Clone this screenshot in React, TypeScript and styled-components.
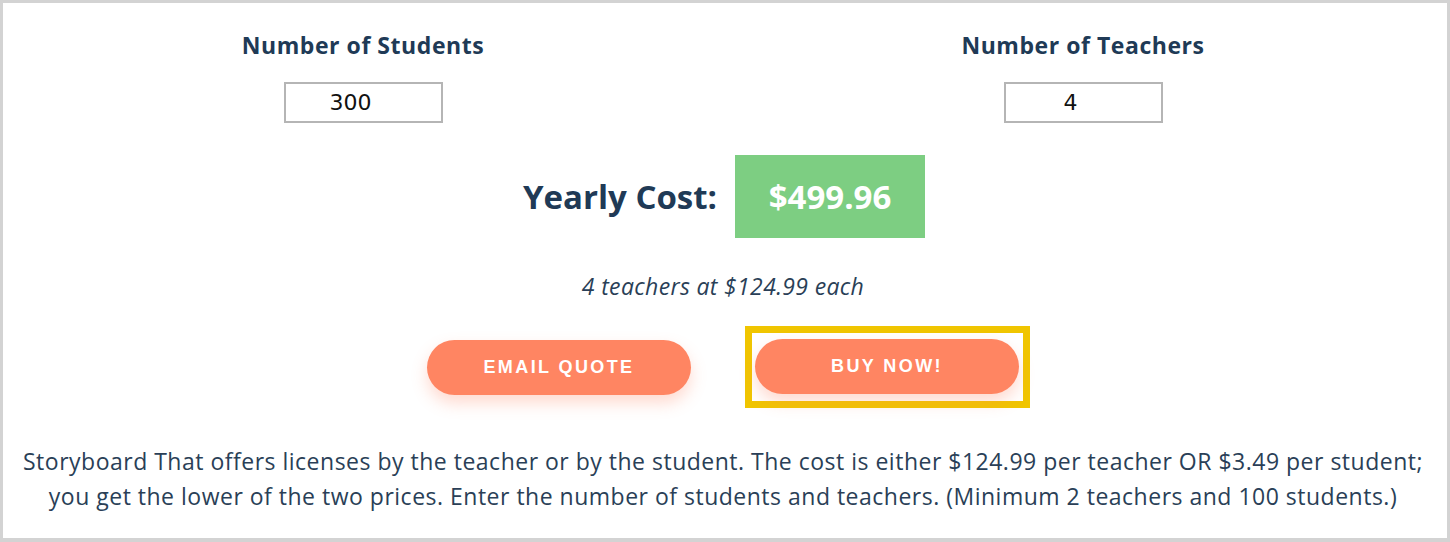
import React from "react";
import styled, { createGlobalStyle } from "styled-components";

const Global = createGlobalStyle`
  html, body { margin: 0; padding: 0; background: #ffffff; }
  * { box-sizing: border-box; }
`;

const Page = styled.div`
  width: 1450px;
  height: 542px;
  border: 3px solid #d3d3d3;
  border-bottom-width: 4px;
  background: #fff;
  font-family: "Open Sans", "Liberation Sans", sans-serif;
  color: #203a56;
  display: flex;
  flex-direction: column;
  align-items: center;
`;

const Fields = styled.div`
  display: grid;
  grid-template-columns: 720px 720px;
  width: 1440px;
  align-self: flex-start;
  padding-top: 27px;
`;

const Field = styled.div`
  display: flex;
  flex-direction: column;
  align-items: center;
`;

const Label = styled.label`
  font-size: 23px;
  font-weight: 700;
  letter-spacing: 0.55px;
  line-height: 30px;
  color: #203a56;
`;

const NumberInput = styled.input`
  margin-top: 22px;
  width: 159px;
  height: 41px;
  border: 2px solid #b5b5b5;
  border-radius: 0;
  padding: 0 25px 0 0;
  text-align: center;
  font-family: "DejaVu Sans", sans-serif;
  font-size: 22px;
  color: #111;
  background: #fff;
  outline: none;
`;

const CostRow = styled.div`
  display: flex;
  align-items: center;
  gap: 18px;
  margin-top: 32px;
  width: 1440px;
  align-self: flex-start;
  justify-content: center;
  padding-left: 2px;
`;

const CostLabel = styled.span`
  font-size: 33px;
  font-weight: 700;
  color: #203a56;
`;

const CostBox = styled.div`
  width: 190px;
  height: 83px;
  background: #7dce82;
  color: #fff;
  font-size: 33px;
  font-weight: 700;
  display: flex;
  align-items: center;
  justify-content: center;
`;

const Note = styled.p`
  margin: 33px 0 0;
  font-size: 23px;
  font-style: italic;
  letter-spacing: 0.35px;
  line-height: 30px;
  color: #2a3f57;
  width: 1440px;
  align-self: flex-start;
  text-align: center;
`;

const Buttons = styled.div`
  display: flex;
  align-items: center;
  justify-content: center;
  gap: 54px;
  margin-top: 25px;
  width: 1440px;
  align-self: flex-start;
  padding-left: 11px;
`;

const Frame = styled.div`
  border: 7px solid #f0c500;
  padding: 6px 4px 7px 3px;
`;

const PillButton = styled.button`
  display: block;
  width: 264px;
  height: 55px;
  border: none;
  border-radius: 28px;
  background: #ff8562;
  color: #fff;
  font-family: "Liberation Sans", Arial, sans-serif;
  font-weight: 700;
  font-size: 18px;
  letter-spacing: 2.4px;
  text-transform: uppercase;
  box-shadow: 0 8px 16px rgba(255, 133, 98, 0.3);
  cursor: pointer;
`;

const Paragraph = styled.p`
  margin: 36px 0 0;
  font-size: 23px;
  letter-spacing: 0.5px;
  line-height: 35px;
  color: #2a3f57;
  text-align: center;
  width: 1440px;
  align-self: flex-start;
`;

export default function App() {
  return (
    <>
      <Global />
      <Page>
        <Fields>
          <Field>
            <Label>Number of Students</Label>
            <NumberInput type="text" defaultValue="300" />
          </Field>
          <Field>
            <Label>Number of Teachers</Label>
            <NumberInput type="text" defaultValue="4" />
          </Field>
        </Fields>
        <CostRow>
          <CostLabel>Yearly Cost:</CostLabel>
          <CostBox>$499.96</CostBox>
        </CostRow>
        <Note>4 teachers at $124.99 each</Note>
        <Buttons>
          <PillButton>Email Quote</PillButton>
          <Frame>
            <PillButton>Buy Now!</PillButton>
          </Frame>
        </Buttons>
        <Paragraph>
          Storyboard That offers licenses by the teacher or by the student. The cost is either $124.99 per teacher OR $3.49 per student;
          <br />
          you get the lower of the two prices. Enter the number of students and teachers. (Minimum 2 teachers and 100 students.)
        </Paragraph>
      </Page>
    </>
  );
}
